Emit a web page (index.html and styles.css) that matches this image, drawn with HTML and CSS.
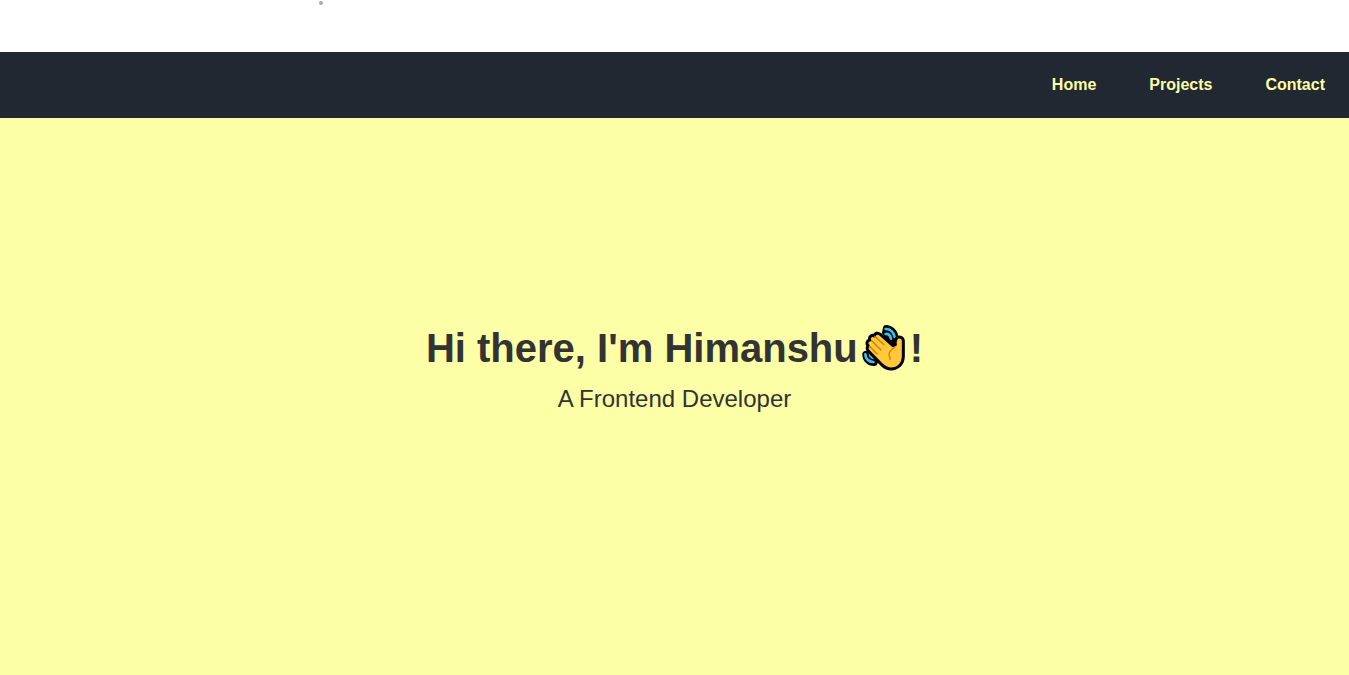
FILE: index.html
```html
<!DOCTYPE html>
<html lang="en">
<head>
<meta charset="utf-8">
<meta name="viewport" content="width=device-width, initial-scale=1">
<title>Himanshu</title>
<link rel="stylesheet" href="styles.css">
</head>
<body>
<span class="speck" aria-hidden="true"></span>
<header class="navbar">
  <nav class="menu">
    <a href="#home">Home</a>
    <a href="#projects">Projects</a>
    <a href="#contact">Contact</a>
  </nav>
</header>
<main class="hero" id="home">
  <h1 class="title"><span>Hi there, I'm Himanshu</span><svg class="wave" viewBox="11 0 156 180" role="img" aria-label="Waving hand">
    <g fill="#000" stroke="#000" stroke-width="18" stroke-linejoin="round">
      <path d="M95 30C109 30 122 43 123 57L115 72L92 44Z"/>
      <path d="M33 108C32 124 45 136 61 135L62 126L44 106Z"/>
    </g>
    <g fill="none" stroke="#37c3f5" stroke-width="8" stroke-linecap="round">
      <path d="M94 33C107 32 119 43 121 57M94 48C102 47 108 53 110 62"/>
      <path d="M33 109C33 122 43 132 57 132M47 107C47 114 52 119 60 120"/>
    </g>
    <path class="palm" d="M43 100C37 94 37 87 42 84C35 78 37 68 46 66C43 56 53 49 60 54C61 45 71 43 78 49L116 83L123 80C121 68 125 57 135 57C143 57 147 63 147 69V113C147 137 132 153 110 153C99 153 91 148 83 141Z"/>
    <path class="crease" d="M61 55L89 80M52 68L80 96M46 85L68 108M120 89C113 94 104 99 104 109C104 116 109 117 107 125"/>
  </svg><span>!</span></h1>
  <p class="subtitle">A Frontend Developer</p>
</main>
</body>
</html>
```
FILE: styles.css
```css
* {
  box-sizing: border-box;
}

body {
  display: flex;
  flex-direction: column;
  min-height: 100vh;
  margin: 0;
  padding-top: 52px;
  background: #fff;
  color: #333;
  font-family: "Liberation Sans", Arial, sans-serif;
}

.speck {
  position: absolute;
  top: 1px;
  left: 319px;
  width: 4px;
  height: 4px;
  border-radius: 50%;
  background: #aaa;
}

.navbar {
  padding: 24px;
  background: #222831;
}

.menu {
  display: flex;
  justify-content: flex-end;
  gap: 53px;
}

.menu a {
  color: #fcffa6;
  font-size: 16px;
  font-weight: 700;
  line-height: 18px;
  text-decoration: none;
}

.hero {
  display: flex;
  flex: 1;
  flex-direction: column;
  align-items: center;
  justify-content: center;
  padding: 0 16px 63px;
  background: #fcffa6;
}

.title {
  display: flex;
  align-items: center;
  margin: 0;
  font-size: 40px;
  line-height: 60px;
}

.wave {
  flex: none;
  width: 52px;
  height: 60px;
}

.palm {
  fill: #ffc83d;
  stroke: #000;
  stroke-width: 9;
  stroke-linejoin: round;
}

.crease {
  fill: none;
  stroke: #d67d00;
  stroke-width: 4;
  stroke-linecap: round;
}

.subtitle {
  margin: 7px 0 0;
  font-size: 24px;
  line-height: 28px;
}
```
